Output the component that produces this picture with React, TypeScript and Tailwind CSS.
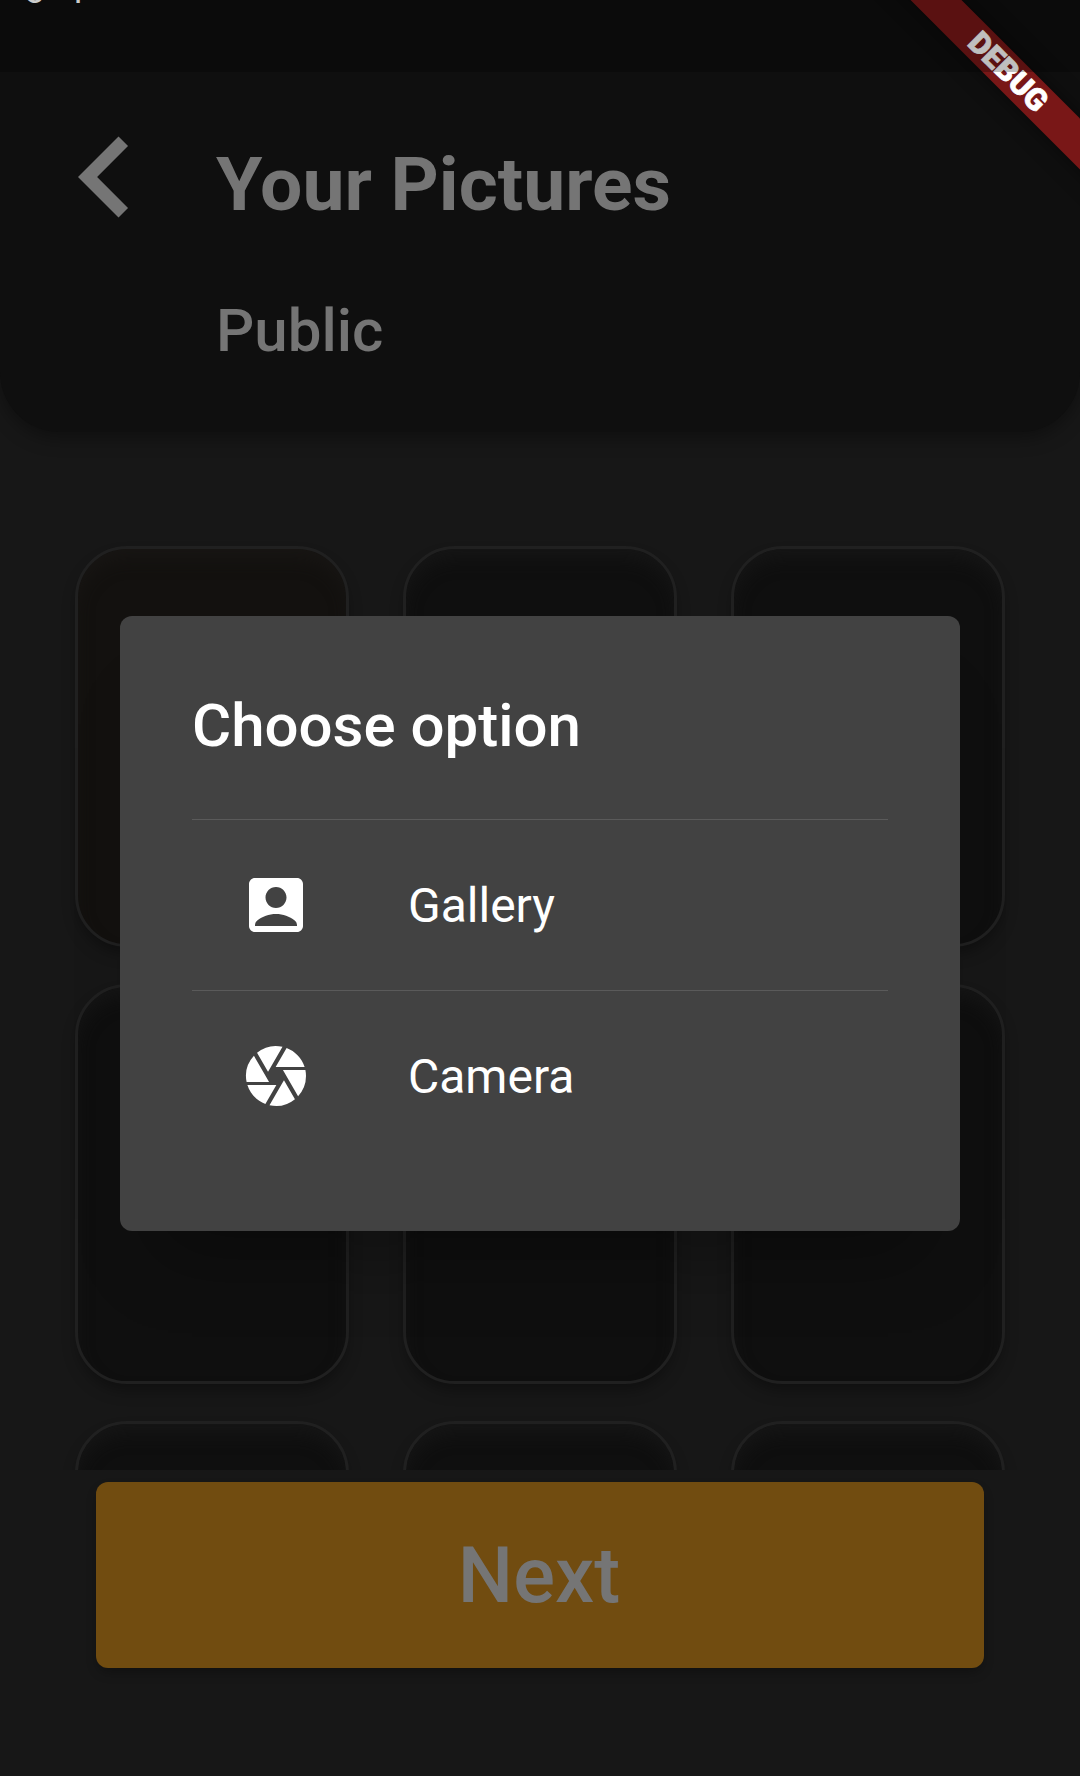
import { MdAccountBox, MdCamera, MdNavigateBefore } from "react-icons/md";
import type { IconType } from "react-icons";

const slots = [
  { id: 1, tinted: true },
  { id: 2, tinted: false },
  { id: 3, tinted: false },
  { id: 4, tinted: false },
  { id: 5, tinted: false },
  { id: 6, tinted: false },
  { id: 7, tinted: false },
  { id: 8, tinted: false },
  { id: 9, tinted: false },
];

function PictureSlot({ tinted }: { tinted: boolean }) {
  return (
    <div
      className={
        "h-[400.5px] rounded-[52px] border-[3px] border-[#202020] " +
        (tinted
          ? "bg-[#13110f] shadow-[inset_0_13px_18px_-4px_#181614,0_9px_15px_-3px_rgba(0,0,0,0.35)]"
          : "bg-[#0f0f0f] shadow-[inset_0_13px_18px_-4px_#161616,0_9px_15px_-3px_rgba(0,0,0,0.35)]")
      }
    />
  );
}

function Option({ icon: Icon, label }: { icon: IconType; label: string }) {
  return (
    <div className="flex h-[171px] items-center border-t border-[#5a5a5a] pl-12">
      <Icon className="size-[72px] shrink-0 text-white" />
      <span className="ml-24 pt-[2px] text-[48px] leading-[56px] text-white">{label}</span>
    </div>
  );
}

function DebugBanner() {
  return (
    <div className="absolute top-0 right-0 size-[240px] overflow-hidden">
      <div className="absolute top-[53.5px] left-[-32.5px] flex h-9 w-[400px] rotate-45 items-center justify-center bg-[#b71c1c]/63 text-[30.6px] leading-none font-black text-white shadow-[0_0_20px_rgba(0,0,0,0.5)] [-webkit-text-stroke:0.8px_white]">
        DEBUG
      </div>
    </div>
  );
}

export default function App() {
  return (
    <div className="relative flex h-[1776px] w-[1080px] flex-col overflow-hidden bg-[#171717] font-['Roboto',sans-serif]">
      <header className="flex h-[432px] shrink-0 items-start rounded-b-[60px] bg-[#0f0f0f] pt-24 pl-6 shadow-[0_6px_18px_rgba(0,0,0,0.35)]">
        <MdNavigateBefore className="size-[162px] shrink-0 text-[#757575]" />
        <div className="ml-[30px] flex flex-col text-[#757575]">
          <h1 className="mt-[44px] text-[75px] leading-[88px] font-bold">Your Pictures</h1>
          <h2 className="mt-[68px] text-[60px] leading-[70px] font-medium">Public</h2>
        </div>
      </header>

      <main className="mt-[114px] grid h-[924px] shrink-0 grid-cols-3 content-start gap-x-[54px] gap-y-[37px] px-[75px] [clip-path:inset(-30px_0_0_0)]">
        {slots.map((slot) => (
          <PictureSlot key={slot.id} tinted={slot.tinted} />
        ))}
      </main>

      <button className="mx-24 mt-3 h-[186px] shrink-0 rounded-xl bg-[#714c10] pt-[2px] pr-[2px] text-[78px] leading-[92px] font-medium text-[#757575] shadow-[0_6px_12px_-2px_rgba(0,0,0,0.3)]">
        Next
      </button>

      <section className="absolute top-[616px] left-[120px] flex h-[615px] w-[840px] flex-col rounded-xl bg-[#424242] px-[72px] pt-[75px] shadow-[0_60px_72px_-36px_rgba(0,0,0,0.3)]">
        <h3 className="h-[128px] text-[60px] leading-[70px] font-medium text-white">Choose option</h3>
        <Option icon={MdAccountBox} label="Gallery" />
        <Option icon={MdCamera} label="Camera" />
      </section>

      <DebugBanner />
      <div className="absolute inset-x-0 top-0 h-[72px] overflow-hidden bg-black/25">
        <span className="absolute top-[-38px] left-[25px] text-[36px] leading-[42px] tracking-[-0.8px] text-[#cccccc]">grap</span>
      </div>
    </div>
  );
}
